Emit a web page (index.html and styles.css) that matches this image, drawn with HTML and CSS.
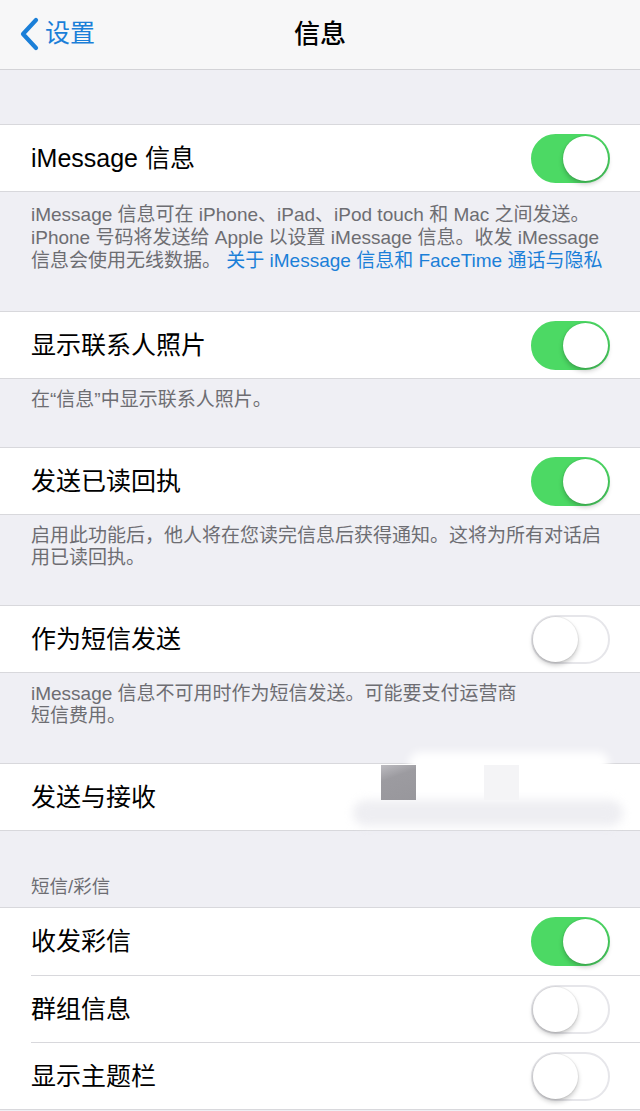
FILE: index.html
```html
<!DOCTYPE html>
<html lang="zh-CN">
<head>
<meta charset="utf-8">
<title>信息</title>
<link rel="stylesheet" href="styles.css">
</head>
<body>
<header class="nav">
  <a class="back" href="#">
    <svg class="chevron" width="20" height="34" viewBox="0 0 20 34"><path d="M17 3 L4 17 L17 31" fill="none" stroke="currentColor" stroke-width="4.2" stroke-linecap="round" stroke-linejoin="round"/></svg>
    <span>设置</span>
  </a>
  <h1 class="title">信息</h1>
  <span class="nav-spacer"></span>
</header>

<main class="content">
  <section class="group group--first">
    <div class="row"><span class="label">iMessage 信息</span><span class="switch switch--on"></span></div>
  </section>
  <p class="footer footer--tall">iMessage 信息可在 iPhone、iPad、iPod touch 和 Mac 之间发送。<br>iPhone 号码将发送给 Apple 以设置 iMessage 信息。收发 iMessage<br>信息会使用无线数据。 <a class="link" href="#">关于 iMessage 信息和 FaceTime 通话与隐私</a></p>

  <section class="group">
    <div class="row"><span class="label">显示联系人照片</span><span class="switch switch--on"></span></div>
  </section>
  <p class="footer">在“信息”中显示联系人照片。</p>

  <section class="group">
    <div class="row"><span class="label">发送已读回执</span><span class="switch switch--on"></span></div>
  </section>
  <p class="footer">启用此功能后，他人将在您读完信息后获得通知。这将为所有对话启<br>用已读回执。</p>

  <section class="group">
    <div class="row"><span class="label">作为短信发送</span><span class="switch"></span></div>
  </section>
  <p class="footer">iMessage 信息不可用时作为短信发送。可能要支付运营商<br>短信费用。</p>

  <section class="group">
    <div class="row row--redacted">
      <span class="label">发送与接收</span>
      <span class="redact">
        <span class="redact-glow"></span>
        <span class="redact-band"></span>
        <span class="redact-dark"></span>
        <span class="redact-light"></span>
      </span>
    </div>
  </section>

  <h2 class="section-header">短信/彩信</h2>
  <section class="group group--multi">
    <div class="row"><span class="label">收发彩信</span><span class="switch switch--on"></span></div>
    <div class="row"><span class="label">群组信息</span><span class="switch"></span></div>
    <div class="row"><span class="label">显示主题栏</span><span class="switch"></span></div>
  </section>
</main>
</body>
</html>
```

FILE: styles.css
```css
* { box-sizing: border-box; }

html, body {
  margin: 0;
  padding: 0;
}

body {
  width: 640px;
  height: 1111px;
  overflow: hidden;
  background: #efeff4;
  font-family: "Liberation Sans", "Noto Sans CJK SC", sans-serif;
  color: #000;
}

.nav {
  height: 70px;
  background: #f7f7f8;
  border-bottom: 1px solid #d3d3d7;
  display: grid;
  grid-template-columns: 1fr auto 1fr;
  align-items: center;
  padding: 0 19px;
}

.back {
  display: flex;
  align-items: center;
  gap: 6px;
  color: #1b7fd8;
  text-decoration: none;
  font-size: 25px;
  line-height: 1;
  justify-self: start;
  margin-top: -2px;
}

.chevron { display: block; }

.title {
  margin: 0;
  font-size: 26px;
  font-weight: 500;
  line-height: 1;
  margin-top: -2px;
}

.content {
  display: flex;
  flex-direction: column;
}

.group {
  background: #fff;
  border-top: 1px solid #d8d8dc;
  border-bottom: 1px solid #d8d8dc;
}

.group--first { margin-top: 54px; }

.row {
  height: 66px;
  margin-left: 31px;
  padding-right: 30px;
  display: flex;
  align-items: center;
  justify-content: space-between;
}

.group--multi .row { height: 67px; }

.row + .row { border-top: 1px solid #d8d8dc; }

.label {
  font-size: 25px;
  line-height: 1;
}

.switch {
  position: relative;
  width: 79px;
  height: 49px;
  border-radius: 25px;
  background: #fff;
  border: 2px solid #e6e6ea;
  flex: none;
}

.switch::after {
  content: "";
  position: absolute;
  top: 0;
  left: 0;
  width: 45px;
  height: 45px;
  border-radius: 50%;
  background: #fff;
  box-shadow: 0 3px 5px rgba(0, 0, 0, 0.22), 0 0 0 1px rgba(0, 0, 0, 0.05);
}

.switch--on {
  background: #4cd964;
  border-color: #4cd964;
}

.switch--on::after {
  left: auto;
  right: 0;
}

.footer {
  margin: 0;
  padding: 10px 4px 36px 31px;
  font-size: 19px;
  line-height: 22px;
  color: #6d6d72;
}

.footer--tall {
  padding-top: 11px;
  padding-bottom: 39px;
  line-height: 23px;
}

.link {
  color: #1b7fd8;
  text-decoration: none;
}

.row--redacted { position: relative; }

.redact {
  position: absolute;
  inset: 0;
  pointer-events: none;
}

.redact-glow {
  position: absolute;
  left: 378px;
  top: -12px;
  width: 200px;
  height: 22px;
  border-radius: 11px;
  background: #fff;
  filter: blur(4px);
}

.redact-band {
  position: absolute;
  left: 322px;
  top: 36px;
  width: 270px;
  height: 26px;
  border-radius: 13px;
  background: #eeeef2;
  filter: blur(5px);
}

.redact-dark {
  position: absolute;
  left: 350px;
  top: 1px;
  width: 35px;
  height: 35px;
  background: linear-gradient(160deg, #bdbcc1 0%, #9c9ba0 35%, #98979c 100%);
}

.redact-light {
  position: absolute;
  left: 453px;
  top: 1px;
  width: 35px;
  height: 35px;
  background: #f4f4f6;
}

.section-header {
  margin: 0;
  padding: 45px 0 9px 31px;
  font-size: 18.5px;
  line-height: 22px;
  font-weight: 400;
  color: #6d6d72;
}
```
